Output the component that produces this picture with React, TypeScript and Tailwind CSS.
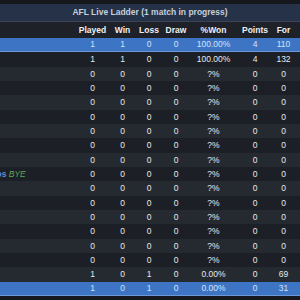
import React from "react";

type Row = {
  name?: React.ReactNode;
  played: number;
  win: number;
  loss: number;
  draw: number;
  pct: string;
  points: number;
  forPts: number;
  against: number;
  live?: boolean;
};

const zero = (): Row => ({ played: 0, win: 0, loss: 0, draw: 0, pct: "?%", points: 0, forPts: 0, against: 0 });

const rows: Row[] = [
  { played: 1, win: 1, loss: 0, draw: 0, pct: "100.00%", points: 4, forPts: 110, against: 31, live: true },
  { played: 1, win: 1, loss: 0, draw: 0, pct: "100.00%", points: 4, forPts: 132, against: 69 },
  zero(),
  zero(),
  zero(),
  zero(),
  zero(),
  zero(),
  zero(),
  {
    ...zero(),
    name: (
      <span className="-ml-[38px] whitespace-nowrap">
        <span className="font-bold text-[#5b8fd8]">Kangaroos</span>{" "}
        <span className="italic text-[#5fa85a]">BYE</span>
      </span>
    ),
  },
  zero(),
  zero(),
  zero(),
  zero(),
  zero(),
  zero(),
  { played: 1, win: 0, loss: 1, draw: 0, pct: "0.00%", points: 0, forPts: 69, against: 132 },
  { played: 1, win: 0, loss: 1, draw: 0, pct: "0.00%", points: 0, forPts: 31, against: 110, live: true },
];

const cols = "grid grid-cols-[77px_31px_29px_24px_30px_45px_38px_19px_50px]";

function Cell({ children }: { children: React.ReactNode }) {
  return <div className="flex items-center justify-center whitespace-nowrap">{children}</div>;
}

export default function App() {
  return (
    <div
      className="w-[300px] h-[300px] overflow-hidden bg-[#16181d] pt-[4px] text-[8.5px] leading-none"
      style={{ fontFamily: '"Liberation Sans", Arial, sans-serif' }}
    >
      <div className="h-[18px] flex items-center justify-center bg-[#263247] font-bold text-[#c5cfdc] border-b border-[#3b4557]">
        AFL Live Ladder (1 match in progress)
      </div>
      <div className={`${cols} h-[16px] w-[343px] bg-[#1e2128] font-bold text-[#eef0f3]`}>
        <div />
        <Cell>Played</Cell>
        <Cell>Win</Cell>
        <Cell>Loss</Cell>
        <Cell>Draw</Cell>
        <Cell>%Won</Cell>
        <Cell>Points</Cell>
        <Cell>For</Cell>
        <Cell>Against</Cell>
      </div>
      {rows.map((r, i) => (
        <div
          key={i}
          className={`${cols} h-[14.33px] w-[343px] ${
            r.live
              ? "bg-[#3e74c4] text-[#d3e3f8] border-b border-[#6d98d6]"
              : i % 2 === 0
                ? "bg-[#252930] text-[#e6e8ec]"
                : "bg-[#1c1f25] text-[#e6e8ec]"
          }`}
        >
          <div className="flex items-center overflow-visible">{r.name}</div>
          <Cell>{r.played}</Cell>
          <Cell>{r.win}</Cell>
          <Cell>{r.loss}</Cell>
          <Cell>{r.draw}</Cell>
          <Cell>{r.pct}</Cell>
          <Cell>{r.points}</Cell>
          <Cell>{r.forPts}</Cell>
          <Cell>{r.against}</Cell>
        </div>
      ))}
    </div>
  );
}
